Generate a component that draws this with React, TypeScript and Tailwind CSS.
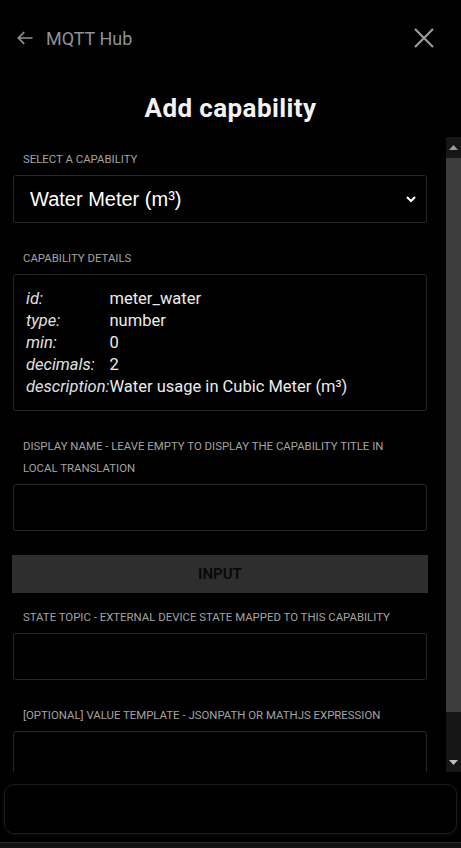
import React from "react";

const font = { fontFamily: "Roboto, 'Noto Sans', sans-serif" };

function Label({ children }: { children: React.ReactNode }) {
  return (
    <div className="px-[10px] text-[11.4px] leading-[22px] uppercase text-[#a3a3a3]">
      {children}
    </div>
  );
}

function Field({
  label,
  children,
  last,
}: {
  label: React.ReactNode;
  children: React.ReactNode;
  last?: boolean;
}) {
  return (
    <div className={last ? "" : "mb-[24px]"}>
      <Label>{label}</Label>
      <div className="mt-[5px]">{children}</div>
    </div>
  );
}

function TextBox() {
  return (
    <input
      type="text"
      className="block h-[47px] w-full rounded-[3px] border border-[#262626] bg-black px-4 text-[16px] text-white outline-none"
    />
  );
}

const details: [string, string][] = [
  ["id:", "meter_water"],
  ["type:", "number"],
  ["min:", "0"],
  ["decimals:", "2"],
  ["description:", "Water usage in Cubic Meter (m³)"],
];

export default function App() {
  return (
    <div className="flex h-[848px] w-full flex-col bg-black" style={font}>
      {/* top bar */}
      <div className="flex h-[76px] items-center justify-between pl-[15px] pr-[27px]">
        <div className="flex items-center gap-[11px] text-[#8d9299]">
          <svg width="20" height="20" viewBox="0 0 24 24" fill="none" stroke="currentColor" strokeWidth="2">
            <path d="M21 12H4M11 5l-7 7 7 7" />
          </svg>
          <span className="text-[18px]">MQTT Hub</span>
        </div>
        <svg width="20" height="20" viewBox="0 0 20 20" fill="none" stroke="#9a9a9a" strokeWidth="2.2">
          <path d="M1 1l18 18M19 1L1 19" />
        </svg>
      </div>

      <h1 className="pt-[16px] pb-[13px] text-center text-[26px] leading-[32px] font-bold tracking-[0.4px] text-[#f2f2f2]">
        Add capability
      </h1>

      {/* scroll area */}
      <div className="flex h-[635px]">
        <div className="flex-1 overflow-hidden pt-[11px] pl-[13px] pr-[19px]">
          <Field label="Select a capability">
            <div className="flex h-[48px] items-center justify-between rounded-[3px] border border-[#262626] pl-[16px] pr-[10px]">
              <span
                className="text-[20px] text-white"
                style={{ fontFamily: "'Liberation Sans', Arial, sans-serif" }}
              >
                Water Meter (m³)
              </span>
              <svg width="10" height="8" viewBox="0 0 10 8" fill="none" stroke="white" strokeWidth="2">
                <path d="M1 2l4 4 4-4" />
              </svg>
            </div>
          </Field>

          <Field label="Capability details">
            <div className="rounded-[3px] border border-[#262626] px-[12px] pt-[13px] pb-[12px] text-[16.5px] leading-[22px] text-[#ececec]">
              <div className="grid grid-cols-[max-content_1fr]">
                {details.map(([k, v]) => (
                  <React.Fragment key={k}>
                    <span className="italic text-[#e0e0e0]">{k}</span>
                    <span>{v}</span>
                  </React.Fragment>
                ))}
              </div>
            </div>
          </Field>

          <Field label="Display name - leave empty to display the capability title in local translation">
            <TextBox />
          </Field>

          <div className="-mx-[1px] mb-[13px] flex h-[38px] items-center justify-center bg-[#2e2e2e] text-[15px] font-bold text-[#0a0a0a]">
            INPUT
          </div>

          <Field label="State topic - external device state mapped to this capability">
            <TextBox />
          </Field>

          <Field label="[Optional] value template - jsonpath or mathjs expression" last>
            <TextBox />
          </Field>
        </div>

        {/* scrollbar */}
        <div className="flex w-[15px] flex-col bg-[#161616]">
          <div className="flex h-[21px] items-center justify-center">
            <svg width="9" height="5" viewBox="0 0 9 5">
              <path d="M0 5L4.5 0 9 5z" fill="#9a9a9a" />
            </svg>
          </div>
          <div className="h-[554px] bg-[#3c3c3c]" />
          <div className="flex-1" />
          <div className="flex h-[20px] items-center justify-center">
            <svg width="9" height="5" viewBox="0 0 9 5">
              <path d="M0 0L4.5 5 9 0z" fill="#bdbdbd" />
            </svg>
          </div>
        </div>
      </div>

      {/* bottom */}
      <div className="flex flex-1 flex-col">
        <div className="mx-[4px] mt-[12px] h-[50px] rounded-[10px] border border-[#1c1c1c] shadow-[0_1px_3px_rgba(255,255,255,0.06)]" />
        <div className="mt-[8px] h-px bg-[#2a2a2a]" />
        <div className="flex-1 bg-[#121212]" />
      </div>
    </div>
  );
}
